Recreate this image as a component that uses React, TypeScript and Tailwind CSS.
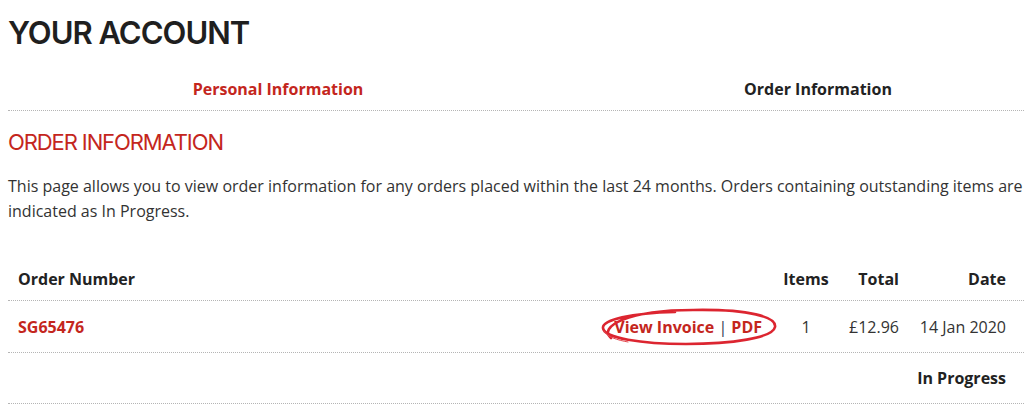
import React from "react";

export default function App() {
  return (
    <div className="w-[1024px] h-[411px] overflow-hidden bg-white font-['Open_Sans',sans-serif] text-[16px] text-[#333]">
      <div className="w-[1080px] ml-2">
        <h1 className="pt-[17px] font-['Inter',sans-serif] text-[31px] leading-none font-semibold tracking-[-1px] text-[#1f1f1f]">
          YOUR ACCOUNT
        </h1>
        <div className="grid grid-cols-2 pt-[29px] pb-[9px] border-b border-dotted border-[#b5b5b5]">
          <div className="text-center font-bold leading-[24px] text-[#c4261d]">Personal Information</div>
          <div className="text-center font-bold leading-[24px] text-[#222]">Order Information</div>
        </div>
        <h2 className="mt-[20px] font-['Inter',sans-serif] text-[22px] leading-none font-normal tracking-[-1.1px] text-[#c4261d]">
          ORDER INFORMATION
        </h2>
        <p className="mt-[21px] leading-[25px] text-[#333]">
          This page allows you to view order information for any orders placed within the last 24 months. Orders containing outstanding items are indicated as In Progress.
        </p>
        <div className="mt-[33px]">
          <div className="flex items-center h-[44px] border-b border-dotted border-[#b5b5b5] font-bold text-[#222]">
            <div className="flex-1 pl-[10px]">Order Number</div>
            <div className="w-[68px] text-center">Items</div>
            <div className="w-[69px] text-right pr-[10px]">Total</div>
            <div className="w-[107px] text-right pr-[10px]">Date</div>
            <div className="w-[72px]" />
          </div>
          <div className="flex items-center h-[52px] border-b border-dotted border-[#b5b5b5]">
            <div className="flex-1 pl-[10px] font-bold text-[#c4261d]">SG65476</div>
            <div className="pr-[10px]">
              <span className="relative inline-block leading-[24px] font-bold text-[#c4261d]">
                View Invoice <span className="font-normal text-[#2b3a55]">|</span> PDF
                <svg
                  className="absolute left-[-17px] top-[-8px] pointer-events-none"
                  width="182"
                  height="40"
                  viewBox="0 0 182 40"
                  fill="none"
                >
                  <path
                    d="M 14 31 C 1 20, 30 3, 96 3 C 152 2, 180 10, 178 20 C 176 31, 134 37, 89 37 C 44 37, 7 31, 6 21 C 5 13, 34 6, 78 5"
                    stroke="#dc2530"
                    strokeWidth="2.6"
                    strokeLinecap="round"
                  />
                  <path
                    d="M 7 24 C 10 30, 20 33, 31 35"
                    stroke="#e34a50"
                    strokeWidth="1"
                    strokeLinecap="round"
                  />
                </svg>
              </span>
            </div>
            <div className="w-[68px] text-center">1</div>
            <div className="w-[69px] text-right pr-[10px]">£12.96</div>
            <div className="w-[107px] text-right pr-[10px]">14 Jan 2020</div>
            <div className="w-[72px]" />
          </div>
          <div className="flex items-center h-[51px] border-b border-dotted border-[#b5b5b5]">
            <div className="flex-1" />
            <div className="w-[107px] text-right pr-[10px] font-bold text-[#222] whitespace-nowrap">In Progress</div>
            <div className="w-[72px]" />
          </div>
        </div>
      </div>
    </div>
  );
}
